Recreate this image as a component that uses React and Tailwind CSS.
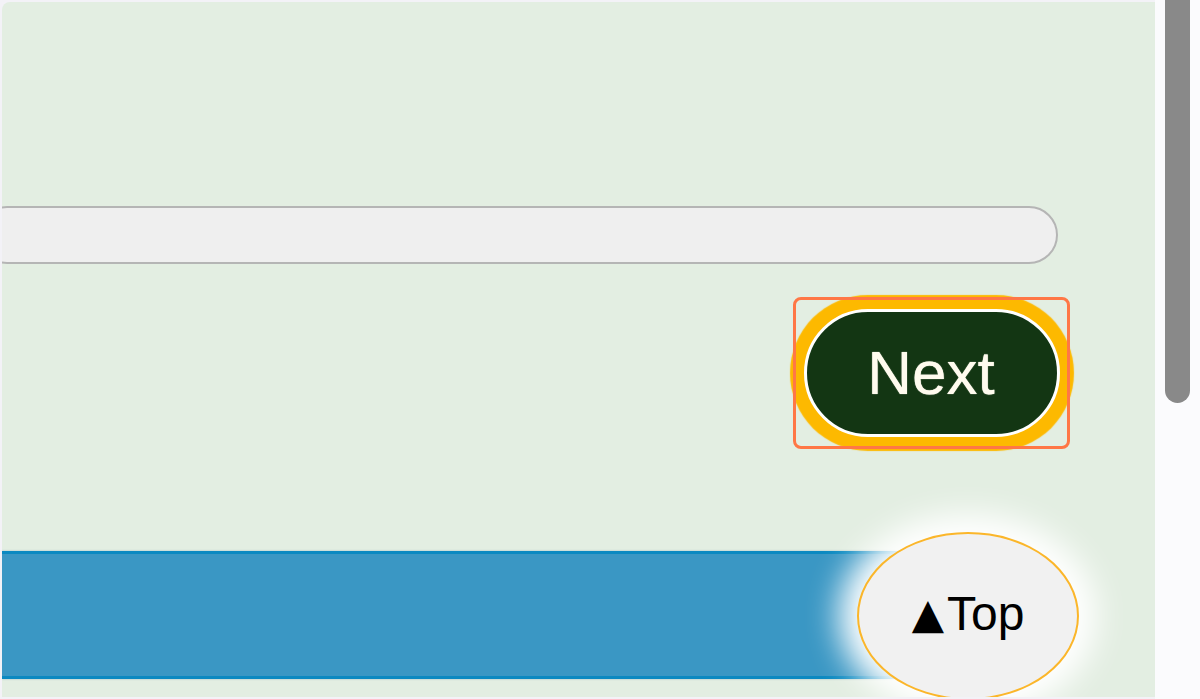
export default function App() {
  return (
    <div className="flex h-[699px] w-[1200px] overflow-hidden bg-[#f3f2f7] font-['Liberation_Sans',Arial,sans-serif]">
      <main className="relative my-[2px] ml-[2px] flex-1 overflow-hidden rounded-tl-lg bg-[#e3eee2]">
        <div className="pt-[204px] pr-[97px]">
          <div className="-ml-[24px] h-[58px] rounded-full border-2 border-[#b5b5b5] bg-[#efefef]" />
        </div>

        <div className="flex justify-end pt-[45px] pr-[95px]">
          <div className="relative">
            <button className="flex h-[128px] w-[256px] items-center justify-center rounded-full border-[3px] border-white bg-[#133613] pr-[2px] text-[62px] leading-none text-[#fffbee] [text-shadow:0_0_1px_#fffbee] shadow-[0_0_1px_14px_#fdb900]">
              Next
            </button>
            <div className="pointer-events-none absolute -top-[12px] -right-[10px] -bottom-[12px] -left-[11px] rounded-lg border-[3px] border-[#ff7746]" />
          </div>
        </div>

        <div className="mt-[114px] h-[128px] w-[900px] border-y-[3px] border-[#0b89c1] bg-[#3a97c4] shadow-[0_0_2px_rgba(40,110,150,0.35)]" />

        <button className="absolute left-[855px] top-[530px] flex h-[168px] w-[222px] items-center justify-center gap-[3px] rounded-[50%] border-2 border-[#fbb62a] bg-[#f1f1f1] pb-[4px] text-[48px] leading-none text-black shadow-[0_0_32px_18px_#ffffff]">
          <span className="font-['DejaVu_Sans',sans-serif] text-[42px]">▲</span>
          <span>Top</span>
        </button>
      </main>

      <aside className="w-[45px] bg-[#fbfbfd] pl-[10px]">
        <div className="h-[403px] w-[25px] rounded-b-full bg-[#898989]" />
      </aside>
    </div>
  )
}
